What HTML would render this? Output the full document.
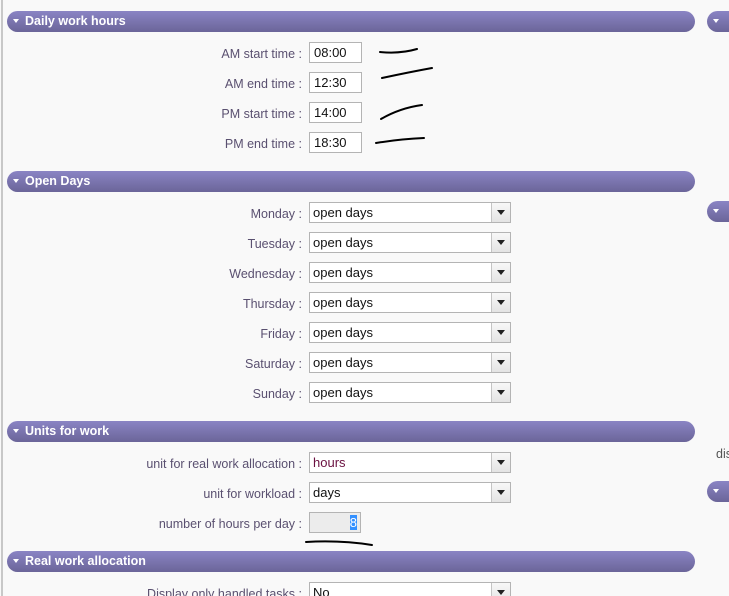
<!DOCTYPE html>
<html><head><meta charset="utf-8"><style>
html,body{margin:0;width:729px;height:596px;overflow:hidden;}
body{background:#f9f9f9;position:relative;font-family:"Liberation Sans",sans-serif;}
.vl{position:absolute;left:1px;top:0;width:2px;height:596px;background:#c8c8c8;}
.h{position:absolute;left:7px;width:688px;height:21px;border-radius:11px;background:linear-gradient(#8a84c4,#6b6599);color:#fff;font-weight:bold;font-size:12.5px;line-height:21px;}
.h span{position:absolute;left:18px;}
.h:before{content:"";position:absolute;left:6px;top:8px;border-left:3.5px solid transparent;border-right:3.5px solid transparent;border-top:4px solid #fff;}
.hr{left:707px;width:60px;}
.lab{position:absolute;right:427px;font-size:12.5px;color:#5a5070;height:21px;line-height:21px;padding-top:2px;white-space:nowrap;}
.in{position:absolute;left:309px;height:19px;border:1px solid #b4b4b4;background:#fff;font-size:13px;line-height:19px;padding-left:4px;width:47px;color:#111;}
.sel{position:absolute;left:309px;width:200px;height:19px;border:1px solid #b4b4b4;background:#fff;font-size:13px;line-height:19px;color:#111;}
.sel span{position:absolute;left:3px;}
.sel i{position:absolute;right:0;top:0;width:18px;height:19px;border-left:1px solid #c4c4c4;background:linear-gradient(#f8f8f8,#e4e4e4);}
.sel i:after{content:"";position:absolute;left:5px;top:7px;border-left:4px solid transparent;border-right:4px solid transparent;border-top:5px solid #222;}
svg{position:absolute;left:0;top:0;}
</style></head><body>
<div class="vl"></div>
<div class="h" style="top:11px"><span>Daily work hours</span></div>
<div class="h hr" style="top:11px"></div>
<div class="lab" style="top:42px">AM start time :</div><div class="in" style="top:42px">08:00</div>
<div class="lab" style="top:72px">AM end time :</div><div class="in" style="top:72px">12:30</div>
<div class="lab" style="top:102px">PM start time :</div><div class="in" style="top:102px">14:00</div>
<div class="lab" style="top:132px">PM end time :</div><div class="in" style="top:132px">18:30</div>

<div class="h" style="top:171px"><span>Open Days</span></div>
<div class="h hr" style="top:201px"></div>
<div class="lab" style="top:202px">Monday :</div><div class="sel" style="top:202px"><span>open days</span><i></i></div>
<div class="lab" style="top:232px">Tuesday :</div><div class="sel" style="top:232px"><span>open days</span><i></i></div>
<div class="lab" style="top:262px">Wednesday :</div><div class="sel" style="top:262px"><span>open days</span><i></i></div>
<div class="lab" style="top:292px">Thursday :</div><div class="sel" style="top:292px"><span>open days</span><i></i></div>
<div class="lab" style="top:322px">Friday :</div><div class="sel" style="top:322px"><span>open days</span><i></i></div>
<div class="lab" style="top:352px">Saturday :</div><div class="sel" style="top:352px"><span>open days</span><i></i></div>
<div class="lab" style="top:382px">Sunday :</div><div class="sel" style="top:382px"><span>open days</span><i></i></div>

<div class="h" style="top:421px"><span>Units for work</span></div>
<div style="position:absolute;left:716px;top:447px;font-size:12.5px;color:#555">dis</div>
<div class="h hr" style="top:481px"></div>
<div class="lab" style="top:452px">unit for real work allocation :</div><div class="sel" style="top:452px"><span style="color:#6a1040">hours</span><i></i></div>
<div class="lab" style="top:482px">unit for workload :</div><div class="sel" style="top:482px"><span>days</span><i></i></div>
<div class="lab" style="top:512px">number of hours per day :</div>
<div class="in" style="top:512px;background:#ececec;width:47px;text-align:right;padding-right:3px;padding-left:0"><span style="background:#3390ff;color:#fff">8</span></div>

<div class="h" style="top:551px"><span>Real work allocation</span></div>
<div class="lab" style="top:582px">Display only handled tasks :</div><div class="sel" style="top:582px"><span>No</span><i></i></div>

<svg width="729" height="596"><g fill="none" stroke="#000" stroke-width="2" stroke-linecap="round">
<path d="M380 52 Q400 54 417 49"/>
<path d="M382 78 Q410 72 432 68"/>
<path d="M381 119 Q400 108 422 105"/>
<path d="M376 143 Q400 139 424 138"/>
<path d="M306 542 Q340 540 372 545"/>
</g></svg>
</body></html>
